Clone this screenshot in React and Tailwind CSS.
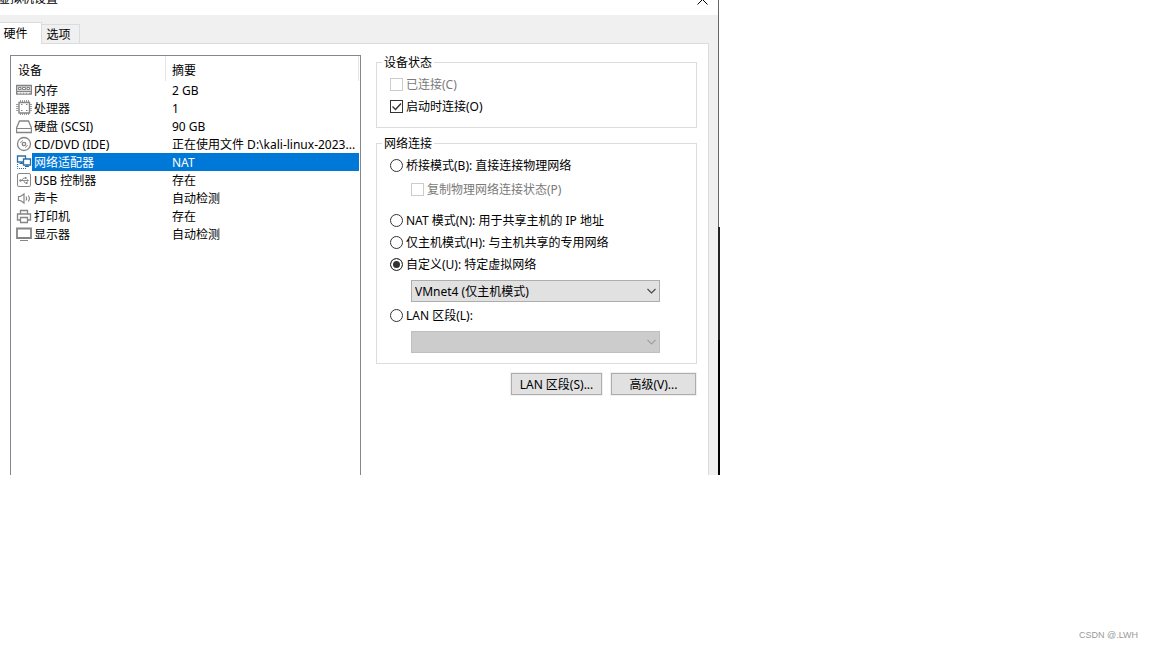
import { useState } from "react";

const drawings = {
  memory: (
    <>
      <path d="M.5 4.500h15v8.500H.5z" strokeWidth="1.300" fill="#d8d8d8" />
      <path d="M2.500 6.500h2.500v2H2.500zM6.500 6.500h3v2h-3zM11 6.500h2.500v2H11z" fill="#fff" />
      <path d="M1 10.500h14" />
      <path d="M2 12h12" stroke="#fff" strokeDasharray="2 1" />
    </>
  ),
  cpu: (
    <>
      <path d="M3 3.500h10.500v10.500H3z" strokeWidth="1.400" />
      <path d="M4.500 1v2M6.500 1v2M8.500 1v2M10.500 1v2M12.500 1v2M4.500 14v2M6.500 14v2M8.500 14v2M10.500 14v2M12.500 14v2M0 5.500h2.500M0 7.500h2.500M0 9.500h2.500M0 11.500h2.500M14 5.500h2M14 7.500h2M14 9.500h2M14 11.500h2" strokeWidth=".8" />
      <path d="M5 5.500h1.500M10 5.500h1.500M5 11.500h1.500M10 11.500h1.500" />
    </>
  ),
  disk: (
    <>
      <path d="M3.500 4h9l3 7v4.500H.5V11z" strokeWidth="1.300" />
      <path d="M.5 11.500h15" />
    </>
  ),
  disc: (
    <>
      <circle cx="8" cy="9" r="6.500" strokeWidth="1.300" />
      <circle cx="8" cy="9" r="1.700" strokeWidth="1.300" />
      <path d="M4.500 8a3.600 3.600 0 0 1 2.300-2.400M11.500 10a3.600 3.600 0 0 1-2.300 2.400" />
    </>
  ),
  network: (
    <g stroke="#2b6fa6">
      <path d="M1.500 3h8v6h-8z" fill="#fff" strokeWidth="1.300" />
      <path d="M3.500 10.500h4M5.500 9v1.500M9 13.500h4M11 12v1.500" />
      <path d="M7.500 6h7v6h-7z" fill="#fff" strokeWidth="1.300" />
      <path d="M1.500 11v4.500H10" strokeDasharray="1 1" />
    </g>
  ),
  usb: (
    <>
      <rect x="1.500" y="2.500" width="13" height="13" rx="1.500" />
      <path d="M4 9.500h8M6 9.500l1.500-2.500H9M7.500 9.500L9 12h1.500" strokeWidth=".9" />
      <path d="M11 8v3l2-1.500zM9 6h1.500v2H9zM10 11h1.500v2H10z" fill="#858585" stroke="none" />
      <circle cx="4.500" cy="9.500" r="1.200" fill="#858585" stroke="none" />
    </>
  ),
  sound: (
    <>
      <path d="M2.500 7.500h2L8 5v9l-3.500-2.500h-2z" strokeWidth="1.200" />
      <path d="M10 7.500q1.300 2 0 4M12.200 6.500q2.400 3 0 6" strokeWidth="1.100" />
    </>
  ),
  printer: (
    <>
      <path d="M4.500 7V3.500h7V7M4.500 13h-3V7h13v6h-3" strokeWidth="1.300" />
      <path d="M4.500 10.500h7v5h-7z" strokeWidth="1.300" />
    </>
  ),
  display: (
    <>
      <path d="M1 3.500h14v9.500H1z" strokeWidth="1.800" />
      <path d="M4 15.500h8" />
    </>
  ),
};

const devices = [
  ["memory", "内存", "2 GB"],
  ["cpu", "处理器", "1"],
  ["disk", "硬盘 (SCSI)", "90 GB"],
  ["disc", "CD/DVD (IDE)", "正在使用文件 D:\\kali-linux-2023..."],
  ["network", "网络适配器", "NAT"],
  ["usb", "USB 控制器", "存在"],
  ["sound", "声卡", "自动检测"],
  ["printer", "打印机", "存在"],
  ["display", "显示器", "自动检测"],
];

function DeviceIcon({ name }) {
  return (
    <svg viewBox="0 0 16 18" className="h-[18px] w-4 shrink-0" fill="none" stroke="#858585" aria-hidden="true">
      {drawings[name]}
    </svg>
  );
}

function DeviceTable() {
  const [selected, setSelected] = useState("network");
  return (
    <div className="border border-b-0 border-[#828790] pr-px">
      <table className="w-full table-fixed border-separate border-spacing-0 text-left">
        <thead>
          <tr className="h-[25px]">
            <th className="w-[155px] border-r border-[#e5e5e5] pl-[7px] pt-1 font-normal">设备</th>
            <th className="border-r border-[#e5e5e5] pl-1.5 pt-1 font-normal">摘要</th>
          </tr>
        </thead>
        <tbody>
          {devices.map(([icon, name, summary]) => {
            const tone = selected === icon ? "bg-[#0078d7] text-white" : "";
            return (
              <tr key={icon} className="h-[18px] leading-4" onClick={() => setSelected(icon)}>
                <td className="p-0">
                  <div className="flex pl-[5px]">
                    <DeviceIcon name={icon} />
                    <span className={`grow whitespace-nowrap pl-0.5 pt-0.5 ${tone}`}>{name}</span>
                  </div>
                </td>
                <td className={`whitespace-nowrap p-0 pt-0.5 pl-1.5 ${tone}`}>{summary}</td>
              </tr>
            );
          })}
        </tbody>
      </table>
    </div>
  );
}

function Check({ children, className = "", ...props }) {
  return (
    <label className={`flex h-[22px] items-center gap-[3px] has-disabled:text-[#7a7a7a] ${className}`}>
      <span className="mb-px grid">
        <input
          type="checkbox"
          className="peer col-start-1 row-start-1 size-[13px] appearance-none border border-[#333] bg-white disabled:border-[#ccc]"
          {...props}
        />
        <svg
          viewBox="0 0 13 13"
          className="pointer-events-none invisible col-start-1 row-start-1 size-[13px] peer-checked:visible"
          fill="none"
          stroke="#333"
          strokeWidth="1.400"
          aria-hidden="true"
        >
          <path d="M2.500 6.500l3 3 5.500-6" />
        </svg>
      </span>
      <span>{children}</span>
    </label>
  );
}

function Radio({ children, value, mode, setMode }) {
  return (
    <label className="flex h-[22px] items-center gap-[3px] whitespace-nowrap">
      <input
        type="radio"
        name="network-mode"
        checked={mode === value}
        onChange={() => setMode(value)}
        className="mb-px size-[13px] shrink-0 appearance-none rounded-full border border-[#333] bg-white checked:bg-[#333] checked:shadow-[inset_0_0_0_2px_#fff]"
      />
      <span>{children}</span>
    </label>
  );
}

function Select({ children, label, disabled }) {
  return (
    <div className="ml-[21px] mr-[23px] grid">
      <select
        aria-label={label}
        disabled={disabled}
        className="col-start-1 row-start-1 h-[22px] w-full appearance-none border border-[#adadad] bg-[#e1e1e1] pt-0.5 pl-[3px] disabled:border-[#bfbfbf] disabled:bg-[#ccc] disabled:opacity-100"
      >
        {children}
      </select>
      <svg
        viewBox="0 0 9 6"
        className={`pointer-events-none col-start-1 row-start-1 mr-1 h-1.5 w-[9px] self-center justify-self-end ${disabled ? "text-[#a0a0a0]" : "text-[#444]"}`}
        fill="none"
        stroke="currentColor"
        strokeWidth="1.100"
        aria-hidden="true"
      >
        <path d="M.5 1l4 4 4-4" />
      </svg>
    </div>
  );
}

function Group({ title, className, children }) {
  return (
    <fieldset className={`min-w-0 border border-[#dcdcdc] px-[13px] pt-[3px] ${className}`}>
      <legend className="-ml-2 px-0.5 pt-px leading-4">{title}</legend>
      {children}
    </fieldset>
  );
}

const buttonStyle =
  "h-[22px] whitespace-nowrap border border-[#adadad] bg-[#e1e1e1] pt-0.5 text-center outline outline-[#f0f0f0]";

export default function App() {
  const [mode, setMode] = useState("custom");
  const [onStart, setOnStart] = useState(true);
  const radio = { mode, setMode };
  return (
    <main className="flex min-h-screen flex-col justify-between bg-white font-['Noto_Sans','Noto_Sans_CJK_SC',sans-serif] text-[12px] leading-[18px] text-black">
      <div className="flex w-[62.5%] min-w-[700px]">
        <section className="flex grow flex-col bg-[#f0f0f0]">
          <header className="flex h-[15px] items-start justify-between overflow-hidden bg-white pr-2.5">
            <h1 className="-mt-2.5 -ml-0.5">虚拟机设置</h1>
            <button type="button" aria-label="关闭" className="-mt-1.5">
              <svg viewBox="0 0 11 11" className="size-[11px]" fill="none" stroke="#000" aria-hidden="true">
                <path d="M.5.5l10 10M.5 10.500l10-10" />
              </svg>
            </button>
          </header>
          <nav className="flex h-[29px] items-end" role="tablist">
            <button type="button" role="tab" aria-selected="true" className="h-[22px] w-[42px] border-t border-r border-[#dcdcdc] bg-white pr-2.5 text-center">
              硬件
            </button>
            <div className="flex h-full grow items-end border-b border-[#dcdcdc] pr-2">
              <button type="button" role="tab" aria-selected="false" className="h-[19px] w-[38px] border-t border-r border-[#dcdcdc] pt-px pr-1 text-center">
                选项
              </button>
            </div>
            <div className="w-[9px]" />
          </nav>
          <div className="mr-[9px] grid grow grid-cols-[351fr_321fr] gap-[15px] border-r border-[#dcdcdc] bg-white pr-[11px] pl-2.5">
            <div className="grid pt-[11px]">
              <DeviceTable />
            </div>
            <div className="pt-2.5 pb-20">
              <Group title="设备状态" className="pb-[9px]">
                <Check disabled>已连接(C)</Check>
                <Check checked={onStart} onChange={(e) => setOnStart(e.target.checked)}>
                  启动时连接(O)
                </Check>
              </Group>
              <Group title="网络连接" className="mt-[7px] pb-2.5">
                <Radio value="bridge" {...radio}>桥接模式(B): 直接连接物理网络</Radio>
                <Check disabled className="mt-0.5 mb-[9px] ml-[21px]">复制物理网络连接状态(P)</Check>
                <Radio value="nat" {...radio}>NAT 模式(N): 用于共享主机的 IP 地址</Radio>
                <Radio value="host" {...radio}>仅主机模式(H): 与主机共享的专用网络</Radio>
                <Radio value="custom" {...radio}>自定义(U): 特定虚拟网络</Radio>
                <div className="mt-1 mb-[3px]">
                  <Select label="虚拟网络">
                    <option>VMnet4 (仅主机模式)</option>
                  </Select>
                </div>
                <Radio value="lan" {...radio}>LAN 区段(L):</Radio>
                <div className="mt-1">
                  <Select label="LAN 区段" disabled />
                </div>
              </Group>
              <div className="mt-[9px] flex justify-end gap-[9px] pr-px">
                <button type="button" className={`${buttonStyle} w-[91px]`}>LAN 区段(S)...</button>
                <button type="button" className={`${buttonStyle} w-[85px]`}>高级(V)...</button>
              </div>
            </div>
          </div>
        </section>
        <div className="flex w-0.5 shrink-0 flex-col" aria-hidden="true">
          <div className="h-[227px] border-l border-[#666]" />
          <div className="h-[113px] bg-[#222]" />
          <div className="grow bg-black" />
        </div>
      </div>
      <footer className="pr-3.5 pb-1 text-right font-['Liberation_Sans',sans-serif] text-[9px] text-[#999]">CSDN @.LWH</footer>
    </main>
  );
}
